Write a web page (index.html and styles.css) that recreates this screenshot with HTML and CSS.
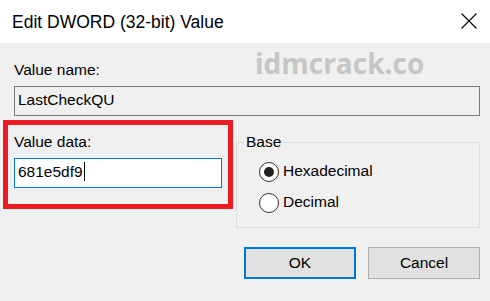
FILE: index.html
```html
<!DOCTYPE html>
<html lang="en">
<head>
<meta charset="utf-8">
<title>Edit DWORD (32-bit) Value</title>
<link rel="stylesheet" href="styles.css">
</head>
<body>
<div class="dialog">
  <div class="titlebar">
    <span class="title">Edit DWORD (32-bit) Value</span>
    <svg class="close" width="16" height="16" viewBox="0 0 16 16" aria-hidden="true">
      <path d="M0.5 0.5 L15.5 15.5 M15.5 0.5 L0.5 15.5" stroke="#000" stroke-width="1.1" fill="none"/>
    </svg>
  </div>
  <div class="content">
    <div class="label name-label">Value name:</div>
    <div class="field field-readonly">LastCheckQU</div>
    <div class="row">
      <div class="highlight">
        <div class="label">Value data:</div>
        <div class="field field-focus">681e5df9<span class="caret"></span></div>
      </div>
      <fieldset class="base">
        <legend>Base</legend>
        <div class="radios">
          <div class="radio"><span class="circle checked"></span><span class="radio-label">Hexadecimal</span></div>
          <div class="radio"><span class="circle"></span><span class="radio-label">Decimal</span></div>
        </div>
      </fieldset>
    </div>
    <div class="buttons">
      <div class="btn btn-default">OK</div>
      <div class="btn">Cancel</div>
    </div>
  </div>
  <div class="watermark">idmcrack.co</div>
</div>
</body>
</html>
```
FILE: styles.css
```css
* { box-sizing: border-box; }
html, body { margin: 0; padding: 0; }
body {
  background: #f0f0f0;
  font-family: "Liberation Sans", Arial, sans-serif;
  font-size: 15.5px;
  color: #000;
}
.dialog {
  position: relative;
  width: 490px;
  height: 301px;
  background: #f0f0f0;
  overflow: hidden;
}
.titlebar {
  height: 43px;
  background: #fff;
  display: flex;
  align-items: center;
  justify-content: space-between;
  padding: 0 13px 0 12px;
}
.title {
  font-size: 17.5px;
  line-height: 20px;
}
.close { display: block; margin-bottom: 1px; }
.content {
  padding: 0 10px 0 14px;
}
.label {
  line-height: 18px;
}
.name-label { margin-top: 18px; }
.field {
  height: 30px;
  line-height: 26px;
  padding: 0 3px 2px;
  border: 1px solid #7a7a7a;
  white-space: nowrap;
}
.field-readonly {
  margin-top: 7px;
  background: #f0f0f0;
}
.row {
  display: flex;
  align-items: flex-start;
  gap: 3px;
  margin: 4px 0 0 -11px;
}
.highlight {
  width: 230px;
  border: 5px solid #ed1c24;
  padding: 8px 6px 16px;
}
.field-focus {
  margin-top: 7px;
  background: #fff;
  border-color: #0078d7;
}
.caret {
  display: inline-block;
  vertical-align: top;
  width: 1px;
  height: 19px;
  margin: 3px 0 0 1px;
  background: #000;
}
.base {
  flex: 1;
  min-width: 0;
  margin: 13px 0 0;
  border: 1px solid #dcdcdc;
  padding: 0 0 14px 7px;
}
.base legend {
  padding: 0 2px;
  line-height: 18px;
}
.radios {
  margin: 11px 0 0 15px;
  display: flex;
  flex-direction: column;
  gap: 11px;
}
.radio {
  display: flex;
  align-items: center;
  height: 20px;
  gap: 4px;
}
.circle {
  width: 20px;
  height: 20px;
  border-radius: 50%;
  border: 1.5px solid #333;
  background: #fff;
  display: flex;
  align-items: center;
  justify-content: center;
}
.circle.checked::after {
  content: "";
  width: 10px;
  height: 10px;
  border-radius: 50%;
  background: #222;
}
.radio-label {
  line-height: 18px;
  padding-bottom: 2px;
}
.buttons {
  display: flex;
  justify-content: flex-end;
  gap: 12px;
  margin-top: 19px;
}
.btn {
  width: 112px;
  height: 32px;
  background: #e1e1e1;
  border: 1px solid #adadad;
  display: flex;
  align-items: center;
  justify-content: center;
  line-height: 18px;
}
.btn-default {
  border: 2px solid #0078d7;
}
.watermark {
  position: absolute;
  top: 49px;
  left: 255px;
  font-family: "Open Sans", "Liberation Sans", sans-serif;
  font-weight: 700;
  font-size: 28px;
  line-height: 1;
  color: #c6c6c6;
  white-space: nowrap;
}
```
